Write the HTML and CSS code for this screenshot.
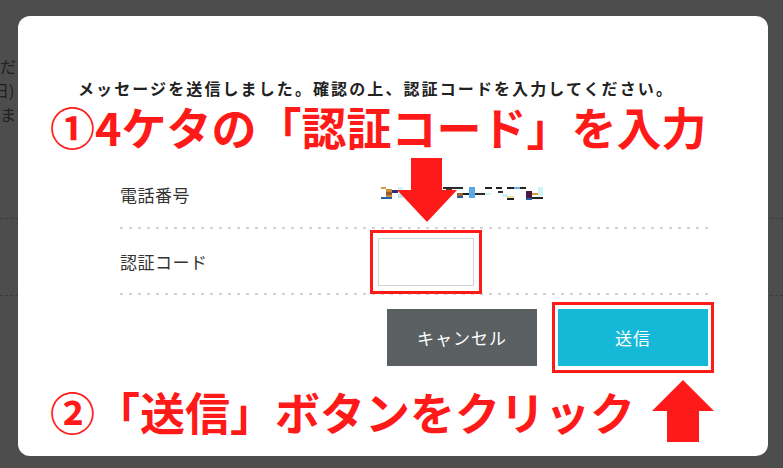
FILE: index.html
```html
<!DOCTYPE html>
<html lang="ja">
<head>
<meta charset="utf-8">
<title>認証コード入力</title>
<link rel="stylesheet" href="styles.css">
</head>
<body>
<div class="page">
  <div class="page-text">
    <p class="pline l1">くださ</p>
    <p class="pline l2">日)</p>
    <p class="pline l3">ます</p>
  </div>
  <div class="page-rule r1"></div>
  <div class="page-rule r2"></div>
</div>

<div class="modal">
  <p class="title">メッセージを送信しました。確認の上、認証コードを入力してください。</p>
  <p class="note">①4ケタの「認証コード」を入力</p>

  <div class="form">
    <div class="row row-phone">
      <div class="label">電話番号</div>
      <div class="value">
        <svg class="mosaic" width="164" height="16" viewBox="0 0 164 16">
          <rect x="1" y="2" width="5" height="2" fill="#d89a4a"/>
          <rect x="6" y="4" width="6" height="8" fill="#c98a3c"/>
          <rect x="6" y="7" width="6" height="3" fill="#9b5a28"/>
          <rect x="1" y="12" width="11" height="2" fill="#2a5ea8"/>
          <rect x="12" y="5" width="6" height="3" fill="#24307a"/>
          <rect x="18" y="2" width="5" height="3" fill="#cff3f7"/>
          <rect x="18" y="9" width="5" height="4" fill="#bfe6f0"/>
          <rect x="23" y="5" width="8" height="3" fill="#7a2430"/>
          <rect x="63" y="2" width="20" height="2" fill="#2a2a2a"/>
          <rect x="66" y="4" width="6" height="3" fill="#6b2a3a"/>
          <rect x="77" y="8" width="6" height="3" fill="#a0652a"/>
          <rect x="77" y="11" width="6" height="2" fill="#2a5ea8"/>
          <rect x="83" y="8" width="6" height="2" fill="#222"/>
          <rect x="89" y="2" width="6" height="11" fill="#5aa8e8"/>
          <rect x="95" y="8" width="10" height="2" fill="#2a2a2a"/>
          <rect x="105" y="8" width="6" height="2" fill="#cff3f7"/>
          <rect x="105" y="2" width="7" height="2" fill="#222"/>
          <rect x="116" y="2" width="6" height="2" fill="#222"/>
          <rect x="118" y="6" width="5" height="2" fill="#333"/>
          <rect x="122" y="9" width="6" height="3" fill="#cff3f7"/>
          <rect x="127" y="2" width="7" height="2" fill="#222"/>
          <rect x="127" y="11" width="7" height="2" fill="#f4e3a0"/>
          <rect x="127" y="13" width="7" height="2" fill="#222"/>
          <rect x="134" y="2" width="6" height="2" fill="#6ab0ea"/>
          <rect x="140" y="2" width="6" height="2" fill="#222"/>
          <rect x="146" y="6" width="6" height="7" fill="#4a1a40"/>
          <rect x="146" y="13" width="6" height="2" fill="#2a5ea8"/>
          <rect x="152" y="8" width="6" height="2" fill="#d89a4a"/>
          <rect x="152" y="12" width="11" height="2" fill="#222"/>
          <rect x="158" y="2" width="5" height="9" fill="#cff3f7"/>
        </svg>
      </div>
    </div>
    <div class="row row-code">
      <div class="label">認証コード</div>
      <div class="value">
        <div class="highlight highlight-input">
          <input class="code-input" type="text" aria-label="認証コード">
        </div>
      </div>
    </div>
  </div>

  <div class="actions">
    <button class="btn btn-cancel" type="button">キャンセル</button>
    <div class="highlight highlight-send">
      <button class="btn btn-send" type="button">送信</button>
    </div>
  </div>

  <p class="note note-2">②「送信」ボタンをクリック</p>

  <svg class="arrow arrow-down" width="60" height="64" viewBox="0 0 60 64">
    <polygon points="14,0 45,0 45,32 60,32 30,64 0,32 14,32" fill="#ff1a1a"/>
  </svg>
  <svg class="arrow arrow-up" width="62" height="62" viewBox="0 0 62 62">
    <polygon points="31,0 62,31 47,31 47,62 15,62 15,31 0,31" fill="#ff1a1a"/>
  </svg>
</div>
</body>
</html>
```

FILE: styles.css
```css
html, body {
  margin: 0;
  padding: 0;
}

body {
  width: 783px;
  height: 468px;
  overflow: hidden;
  background: #4d4d4d;
  font-family: "Noto Sans CJK JP", "Noto Sans", sans-serif;
  position: relative;
}

/* page behind the overlay */
.page {
  padding-top: 54px;
}

.page-text {
  font-size: 16px;
  line-height: 24px;
  color: #1f1f1f;
}

.pline {
  margin: 0;
  white-space: nowrap;
}

.l1 { margin-left: -16px; }
.l2 { margin-left: -7px; }
.l3 { margin-left: 0; }

.page-rule {
  height: 1px;
  background-image: linear-gradient(to right, #3c3c3c 3px, transparent 3px);
  background-size: 5px 1px;
}

.r1 { margin-top: 92px; }
.r2 { margin-top: 76px; }

/* modal */
.modal {
  position: absolute;
  left: 18px;
  top: 16px;
  width: 750px;
  height: 440px;
  box-sizing: border-box;
  background: #fff;
  border-radius: 12px;
  padding: 62px 60px 0 32px;
  display: flex;
  flex-direction: column;
}

.title {
  margin: 0 0 0 28px;
  font-size: 16px;
  line-height: 20px;
  font-weight: 700;
  letter-spacing: 2.1px;
  color: #222;
  white-space: nowrap;
}

.note {
  margin: 5px 0 0 0;
  font-size: 45px;
  line-height: 48px;
  font-weight: 700;
  color: #ff1a1a;
  white-space: nowrap;
}

.note-2 {
  margin-top: 15px;
}

.form {
  margin: 10px 0 0 70px;
}

.row {
  display: flex;
  align-items: center;
  box-sizing: border-box;
  background-image: linear-gradient(to right, #d2d2d2 3px, transparent 3px);
  background-size: 9px 2px;
  background-repeat: repeat-x;
  background-position: left bottom;
}

.row-phone {
  height: 68px;
  padding-bottom: 2px;
}

.row-code {
  height: 66px;
  padding-bottom: 2px;
}

.label {
  width: 258px;
  font-size: 17px;
  letter-spacing: 0.5px;
  color: #333;
}

.value {
  display: flex;
  align-items: center;
}

.mosaic {
  display: block;
  margin-left: 2px;
  margin-top: -2px;
}

.highlight {
  border: 3px solid #ff1a1a;
  box-sizing: border-box;
}

.highlight-input {
  margin-left: -8px;
  padding: 5px;
  margin-bottom: -2px;
}

.code-input {
  display: block;
  width: 96px;
  height: 48px;
  box-sizing: border-box;
  border: 1px solid #d3d3d3;
  margin: 0;
  padding: 0;
  outline: none;
}

.actions {
  margin: 7px -6px 0 0;
  display: flex;
  justify-content: flex-end;
  align-items: center;
  gap: 15px;
}

.highlight-send {
  padding: 4px 3px;
}

.btn {
  display: block;
  width: 150px;
  height: 57px;
  border: none;
  margin: 0;
  padding: 0;
  font-family: "Noto Sans CJK JP", "Noto Sans", sans-serif;
  font-size: 17px;
  letter-spacing: 1px;
  color: #fff;
}

.btn-cancel {
  background: #5a6061;
}

.btn-send {
  background: #15b8d7;
}

/* annotation arrows laid over the dialog */
.arrow {
  position: absolute;
  display: block;
}

.arrow-down {
  left: 379px;
  top: 142px;
}

.arrow-up {
  left: 634px;
  top: 364px;
}
```
